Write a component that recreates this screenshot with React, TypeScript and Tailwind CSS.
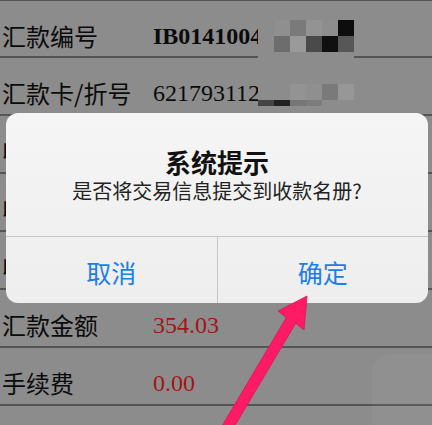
const cjk = { fontFamily: '"Noto Sans CJK SC", "Noto Sans", sans-serif' };
const serif = { fontFamily: '"Liberation Serif", "Times New Roman", serif' };

type Row = { label: string; value?: string; bold?: boolean; red?: boolean };

const rows: Row[] = [
  { label: '汇款编号', value: 'IB0141004', bold: true },
  { label: '汇款卡/折号', value: '621793112' },
  { label: '收款人' },
  { label: '收款账号' },
  { label: '收款银行' },
  { label: '汇款金额', value: '354.03', red: true },
  { label: '手续费', value: '0.00', red: true },
  { label: '' },
];

// censor blocks over the account numbers (16px cells)
const mosaic: string[][] = [
  ['#8c8c8c', '#8f8f8f', '#7a7a7a', '#939393', '#8d8d8d', '#0d0d0d'],
  ['#8c8c8c', '#6d6d6d', '#9a9a9a', '#4a4a4a', '#101010', '#575757'],
  ['#8c8c8c', '#8c8c8c', '#8c8c8c', '#8c8c8c', '#8c8c8c', '#8c8c8c'],
  ['#8c8c8c', '#8c8c8c', '#8c8c8c', '#8c8c8c', '#8c8c8c', '#8c8c8c'],
  ['#8c8c8c', '#8c8c8c', '#939393', '#8f8f8f', '#7a7a7a', '#979797'],
  ['#444444', '#222222', '#767676', '#7c7c7c', '#8c8c8c', '#8c8c8c'],
];

const DataRow = ({ row, first }: { row: Row; first: boolean }) => (
  <div
    className={`flex h-[58px] shrink-0 items-start border-b-2 border-[#555555] pt-[22px] ${
      first ? 'border-t border-t-[#555555]' : ''
    }`}
  >
    <div className="w-[153px] shrink-0 pl-[2px] text-[24px] leading-[26px] text-[#0b0b0b]" style={cjk}>
      {row.label}
    </div>
    {row.value && (
      <div
        className={`text-[24px] leading-[26px] whitespace-nowrap ${row.bold ? 'font-bold' : ''} ${
          row.red ? 'text-[#a11616]' : 'text-[#0b0b0b]'
        }`}
        style={serif}
      >
        {row.value}
      </div>
    )}
  </div>
);

export default function App() {
  return (
    <div className="relative h-[425px] w-[432px] overflow-hidden bg-[#8c8c8c]">
      {/* list behind the alert */}
      <div className="flex flex-col">
        {rows.map((r, i) => (
          <DataRow key={i} row={r} first={i === 0} />
        ))}
      </div>

      {/* mosaic */}
      <div className="absolute left-[258px] top-[20px] flex flex-col">
        {mosaic.map((line, y) => (
          <div key={y} className={`flex ${y === 5 ? 'h-[6px]' : 'h-[16px]'}`}>
            {line.map((c, x) => (
              <div key={x} className="h-full w-[16px]" style={{ backgroundColor: c }} />
            ))}
          </div>
        ))}
      </div>

      {/* assistive touch ghost */}
      <div className="absolute left-[372px] top-[355px] h-[90px] w-[90px] rounded-[16px] bg-white/[0.04]" />

      {/* alert */}
      <div className="absolute left-[6px] top-[113px] flex h-[190px] w-[422px] flex-col overflow-hidden rounded-[12px] bg-gradient-to-b from-[#f5f5f5] to-[#eeeeee]">
        <div className="flex h-[123px] shrink-0 flex-col items-center pt-[33px]" style={cjk}>
          <div className="text-[26px] leading-[32px] font-bold text-[#111111]">系统提示</div>
          <div className="text-[20px] leading-[26px] text-[#222222]">是否将交易信息提交到收款名册?</div>
        </div>
        <div className="flex flex-1 border-t border-[#c6c6c6] text-[25px] text-[#1d7ee6]" style={cjk}>
          <div className="flex flex-1 items-center justify-center pt-[5px]">取消</div>
          <div className="flex flex-1 items-center justify-center border-l border-[#c6c6c6] pt-[5px]">确定</div>
        </div>
      </div>

      {/* annotation arrow */}
      <svg className="pointer-events-none absolute inset-0" width="432" height="425" viewBox="0 0 432 425">
        <polygon
          points="307,296 304,330 295.7,323.3 224.7,442.8 215.3,437.2 286.3,317.7 278,311"
          fill="#ff1a66"
          stroke="#e0105a"
          strokeWidth="0.8"
          strokeLinejoin="round"
        />
      </svg>
    </div>
  );
}
